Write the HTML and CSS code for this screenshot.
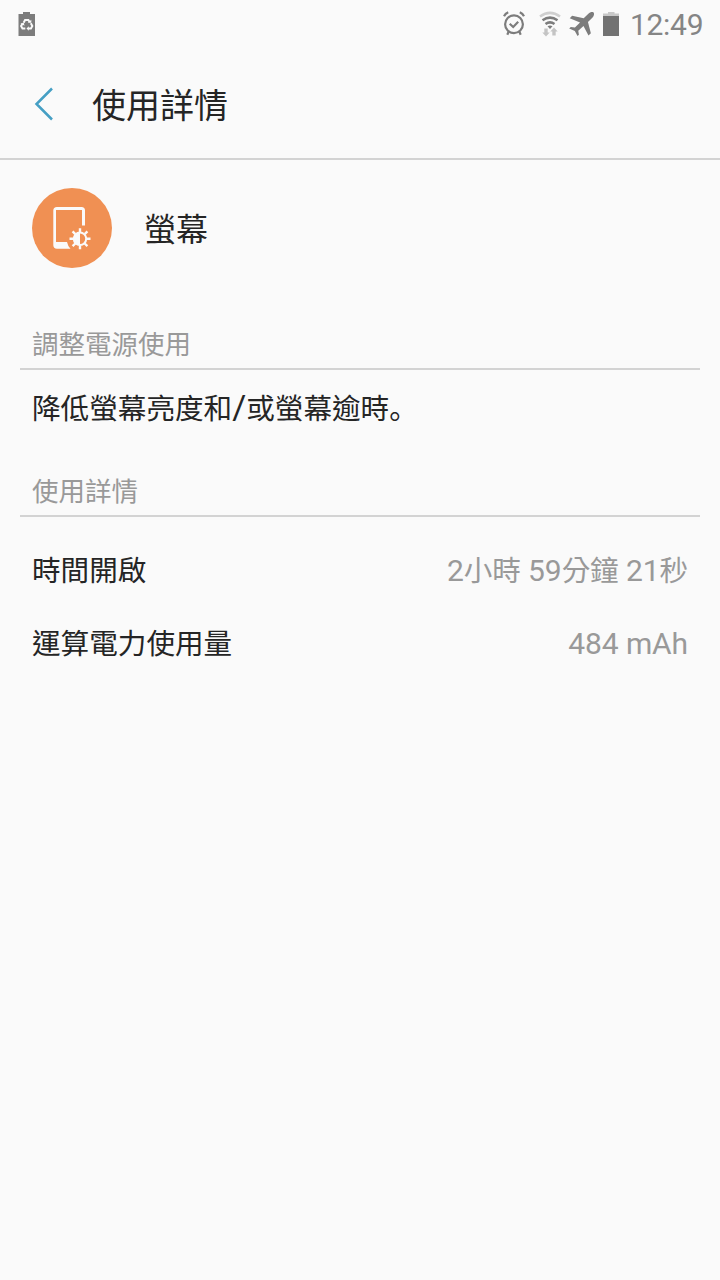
FILE: index.html
```html
<!DOCTYPE html>
<html lang="zh-Hant">
<head>
<meta charset="utf-8">
<title>使用詳情</title>
<link rel="stylesheet" href="styles.css">
</head>
<body>
<div class="status-bar">
  <svg class="battery-save" width="18" height="24" viewBox="0 0 18 24">
    <path fill="#7c7c7c" d="M5 0h7v2h5v22H.5V2H5z"/>
    <g fill="none" stroke="#fafafa" stroke-width="2">
      <path d="M5.6 10.8l1.5-2.700h3.300l1.200 2"/>
      <path d="M12.800 11.300l1.500 2.700-1.400 2.600h-2.600"/>
      <path d="M7.300 16.600H4.500L3.100 14l1.400-2.300"/>
    </g>
    <path fill="#fafafa" d="M9.800 10.700h3.500V7.800zM10.800 14.300v4.400l-2.300-2.200zM2.500 11.500l3.300-.8.700 3z"/>
  </svg>
  <div class="status-right">
    <svg class="alarm" width="22" height="26" viewBox="0 0 22 26" fill="none" stroke="#7c7c7c">
      <circle cx="11" cy="13.300" r="8.900" stroke-width="2.200"/>
      <path stroke-width="2.200" d="M6.700 12.700l3.500 3.300 5-5.200M1 5.300Q2.300 2.600 5.200 1.300M21 5.300Q19.700 2.600 16.800 1.300M5.600 20.700l-1.300 3M16.400 20.700l1.300 3"/>
    </svg>
    <svg class="wifi" width="22" height="26" viewBox="0 0 22 26">
      <g fill="none" stroke-width="2.500">
        <path stroke="#cfcfcf" d="M1 5.500Q11-1.800 21 5.500"/>
        <path stroke="#7c7c7c" d="M3.500 9.300Q11 4 18.500 9.300M6.500 13Q11 9.800 15.500 13"/>
      </g>
      <path fill="#7c7c7c" d="M8.500 15.300q2.500-1.700 5 0L11 18z"/>
      <path fill="#c4c4c4" d="M5.300 17.500h3.400v4h2L7 25.500l-3.700-4h2zM13.300 24.500v-4h-2l3.700-4 3.700 4h-2v4z"/>
    </svg>
    <svg class="plane" width="25" height="24" viewBox="0 0 24 24" preserveAspectRatio="none">
      <path fill="#7c7c7c" d="M23.600.5c.9 1.300.3 3.700-1.200 5.200l-4.200 4.300 2.800 11.300-2.300 2.200-4.800-9.400-5 4.600.6 4-1.300 1.300-2.600-5L.2 16.400l1.500-1.500 4 .6 4.900-5.100L.7 6.200 3 3.700l11.100 2.500 4.500-4.500C20.100.2 22.300-.3 23.600.5z"/>
    </svg>
    <svg class="battery" width="16" height="24" viewBox="0 0 16 24">
      <path fill="#c8c8c8" d="M5 0h6.500v1.500H16V5H0V1.500h5z"/><path fill="#727272" d="M0 4h16v20H0z"/>
    </svg>
    <span class="clock">12:49</span>
  </div>
</div>
<header class="app-bar">
  <svg class="back" width="20" height="34" viewBox="0 0 20 34"><path fill="none" stroke="#459fc4" stroke-width="2.500" d="M18 1.500L2.500 17 18 32.500"/></svg>
  <h1 class="title">使用詳情</h1>
</header>
<main>
  <div class="item">
    <svg class="item-icon" width="80" height="80" viewBox="0 0 80 80">
      <circle cx="40" cy="40" r="40" fill="#f09053"/>
      <path fill="#fafafa" fill-rule="evenodd" d="M25 19h24.500q3.500 0 3.500 3.500v15h-3V22H24v32h11q.8 4 3.500 6.800H25q-3.700 0-3.700-3.700V22.500Q21.300 19 25 19z"/>
      <g fill="none" stroke="#fafafa">
        <circle cx="48" cy="50.800" r="6.200" stroke-width="2"/>
        <path stroke-width="2.400" d="M48 40.300v4M48 57.300v4M37.500 50.800h4M54.500 50.800h4M40.600 43.400l2.700 2.700M52.700 55.500l2.700 2.700M55.400 43.400l-2.700 2.700M43.300 55.500l-2.700 2.700"/>
      </g>
      <path fill="#fafafa" d="M48 44.300a6.500 6.500 0 0 0 0 13z"/>
    </svg>
    <span class="item-name">螢幕</span>
  </div>
  <h2 class="section first">調整電源使用</h2>
  <p class="tip">降低螢幕亮度和<span class="slash">/</span>或螢幕逾時<span class="stop" lang="zh-Hans">。</span></p>
  <h2 class="section second">使用詳情</h2>
  <div class="row"><span class="label">時間開啟</span><span class="value">2<span class="cjk">小時</span> 59<span class="cjk">分鐘</span> 21<span class="cjk">秒</span></span></div>
  <div class="row"><span class="label">運算電力使用量</span><span class="value">484 mAh</span></div>
</main>
</body>
</html>
```
FILE: styles.css
```css
* { box-sizing: border-box; }
body {
  margin: 0;
  min-height: 1280px;
  background: #fafafa;
  color: #252525;
  font-family: Roboto, "Noto Sans CJK TC", sans-serif;
}
h1, h2, p { margin: 0; font-weight: 400; }
svg { display: block; flex: none; }
.status-bar {
  height: 50px;
  padding: 0 16px 0 18px;
  display: flex;
  justify-content: space-between;
  align-items: flex-start;
}
.battery-save { margin-top: 12px; }
.status-right { display: flex; }
.alarm { margin: 11px 14px 0 0; }
.wifi { margin: 11px 8px 0 0; }
.plane { margin: 12px 9px 0 0; }
.battery { margin: 12px 11px 0 0; }
.clock {
  width: 74px;
  font-size: 30px;
  letter-spacing: -0.3px;
  line-height: 50px;
  color: #858585;
}
.app-bar {
  height: 110px;
  padding-left: 34px;
  display: flex;
  align-items: center;
  border-bottom: 2px solid #d3d3d3;
}
.back { margin-right: 38px; }
.title { padding-top: 4px; font-size: 34px; line-height: 50px; }
.item {
  height: 136px;
  padding: 0 32px;
  display: flex;
  align-items: center;
  gap: 32px;
}
.item-name { padding-top: 4px; font-size: 32px; line-height: 46px; }
.section {
  height: 52px;
  margin: 0 20px;
  padding: 2px 0 0 12px;
  font-size: 26.5px;
  line-height: 50px;
  color: #999;
  border-bottom: 2px solid #d3d3d3;
}
.first { margin-top: 22px; }
.second { margin-top: 33px; }
.tip { padding: 0 32px; height: 48px; margin-top: 14px; font-size: 28.6px; line-height: 50px; }
.slash { font-size: 34px; line-height: 1; }
.stop { font-family: "Noto Sans CJK SC", sans-serif; line-height: 1; }
.row {
  height: 73px;
  padding: 0 32px;
  display: flex;
  align-items: center;
  justify-content: space-between;
}
.second + .row { margin-top: 17px; }
.row + .row { height: 72px; }
.label { padding-bottom: 4px; font-size: 28.6px; }
.value { font-size: 30px; letter-spacing: -0.1px; color: #999; }
.cjk { font-size: 28.6px; line-height: 1; }
```
